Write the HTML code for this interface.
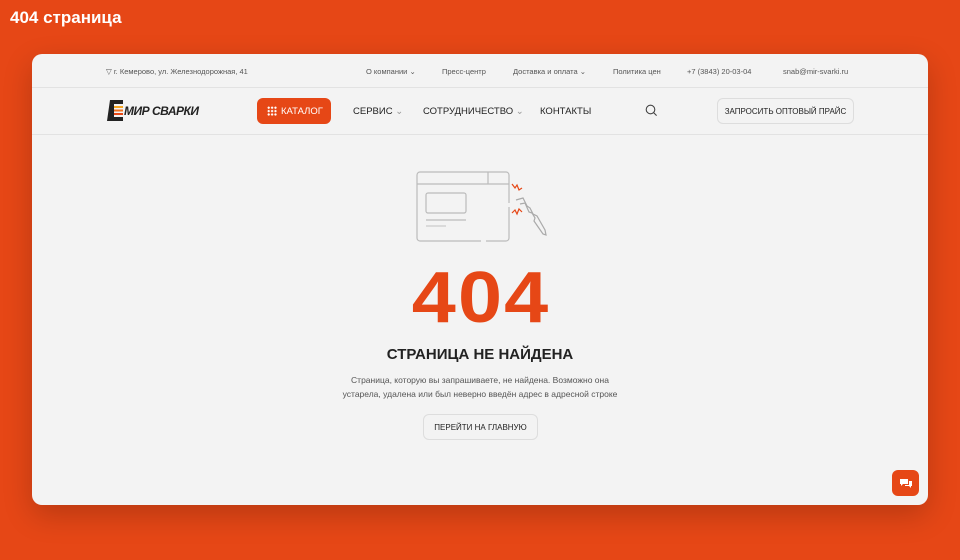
<!DOCTYPE html>
<html><head><meta charset="utf-8"><style>
*{margin:0;padding:0;box-sizing:border-box}
body{width:960px;height:560px;background:#e64716;font-family:"Liberation Sans",sans-serif;position:relative;overflow:hidden;color:#222}
.t{position:absolute;left:10px;top:8px;color:#fff;font-weight:bold;font-size:17px}
.card{position:absolute;left:32px;top:54px;width:896px;height:451px;background:#f3f3f3;border-radius:10px;overflow:hidden;box-shadow:0 10px 30px rgba(0,0,0,.2)}
.a{position:absolute;white-space:nowrap}
.s{font-size:7.5px;color:#555}
.n{font-size:9.5px;color:#222}
.hr{position:absolute;left:0;width:896px;height:1px;background:#e2e2e2}
</style></head><body>
<div class="t">404 страница</div>
<div class="card">
<div class="a s" style="left:74px;top:13px">▽ г. Кемерово, ул. Железнодорожная, 41</div>
<div class="a s" style="left:334px;top:13px">О компании ⌄</div>
<div class="a s" style="left:410px;top:13px">Пресс-центр</div>
<div class="a s" style="left:481px;top:13px">Доставка и оплата ⌄</div>
<div class="a s" style="left:581px;top:13px">Политика цен</div>
<div class="a s" style="left:655px;top:13px">+7 (3843) 20-03-04</div>
<div class="a s" style="left:751px;top:13px">snab@mir-svarki.ru</div>
<div class="hr" style="top:33px"></div>
<svg class="a" style="left:75px;top:46px" width="16" height="21"><path d="M3 0h13v4H7v13h9v4H0z" fill="#222"/><rect x="7" y="6" width="9" height="2" fill="#f5a623"/><rect x="7" y="9.5" width="9" height="2" fill="#f07020"/><rect x="7" y="13" width="9" height="2" fill="#e64716"/></svg>
<div class="a" style="left:92px;top:50px;font-size:12px;font-weight:bold;font-style:italic;color:#222;letter-spacing:-.5px">МИР СВАРКИ</div>
<div class="a" style="left:225px;top:44px;width:74px;height:26px;background:#e64716;border-radius:6px;color:#fff;font-size:9.5px;line-height:28px;padding-left:24px">КАТАЛОГ</div>
<div class="a" style="left:235px;top:52px;width:10px;height:10px;background-image:radial-gradient(circle,#fff 1px,transparent 1.2px);background-size:3.4px 3.4px"></div>
<div class="a n" style="left:321px;top:52px">СЕРВИС <span style="color:#999">⌄</span></div>
<div class="a n" style="left:391px;top:52px">СОТРУДНИЧЕСТВО <span style="color:#999">⌄</span></div>
<div class="a n" style="left:508px;top:52px">КОНТАКТЫ</div>
<svg class="a" style="left:613px;top:50px" width="13" height="13"><circle cx="5.5" cy="5.5" r="4.3" fill="none" stroke="#444" stroke-width="1.1"/><path d="M8.6 8.6l3 3" stroke="#444" stroke-width="1.1"/></svg>
<div class="a" style="left:685px;top:44px;width:137px;height:26px;border:1px solid #ddd;border-radius:6px;font-size:8px;line-height:25px;text-align:center;color:#222">ЗАПРОСИТЬ ОПТОВЫЙ ПРАЙС</div>
<div class="hr" style="top:80px"></div>
<svg class="a" style="left:368px;top:106px" width="160" height="90" viewBox="400 160 160 90" fill="none" stroke="#bbb" stroke-width="1.2">
<path d="M481 241h-61a3 3 0 0 1-3-3v-63a3 3 0 0 1 3-3h86a3 3 0 0 1 3 3v28"/><path d="M509 207v31a3 3 0 0 1-3 3h-20"/><path d="M417 184h92M488 172v12"/><rect x="426" y="193" width="40" height="20" rx="2"/><path d="M426 220h40"/><path d="M426 226h20" stroke="#ccc"/>
<path d="M516 200l7-2 4 8 3 2 3 6 4 2 8 14 1 5-3-1-9-13 1-3-3-5-3-1-4-9-5 1" stroke="#aaa"/>
<path d="M512 184l3 4 2-3 2 5 3-2M512 213l3-3 2 4 2-5 3 3" stroke="#e64716"/></svg>
<div class="a" style="left:0;width:896px;top:203px;text-align:center"><span style="display:inline-block;font-size:72px;font-weight:bold;color:#e64716;letter-spacing:2px;transform:scaleX(1.1);margin-left:2px">404</span></div>
<div class="a" style="left:0;width:896px;top:292px;text-align:center;font-size:15px;font-weight:bold;color:#222">СТРАНИЦА НЕ НАЙДЕНА</div>
<div class="a" style="left:0;width:896px;top:320px;text-align:center;font-size:8.5px;color:#555;line-height:13.5px">Страница, которую вы запрашиваете, не найдена. Возможно она<br>устарела, удалена или был неверно введён адрес в адресной строке</div>
<div class="a" style="left:391px;top:360px;width:115px;height:26px;border:1px solid #ddd;border-radius:6px;font-size:8px;line-height:25px;text-align:center;color:#222">ПЕРЕЙТИ НА ГЛАВНУЮ</div>
<div class="a" style="left:860px;top:416px;width:27px;height:26px;background:#e64716;border-radius:6px"><svg width="27" height="26"><path d="M8 9h8v5h-5l-2 2v-2H8z" fill="#fff"/><path d="M17 11h3v5h-1v2l-2-2h-4v-1h4z" fill="#fff"/></svg></div>
</div>
</body></html>
